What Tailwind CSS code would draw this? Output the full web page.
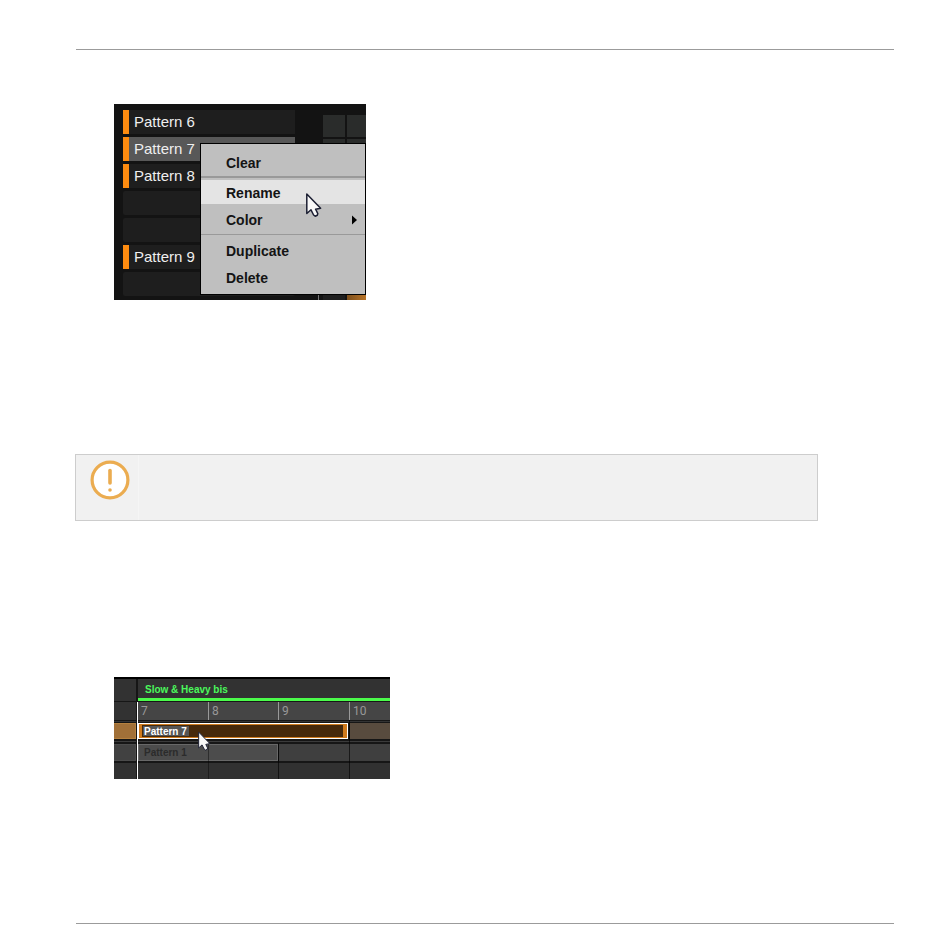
<!DOCTYPE html>
<html lang="en">
<head>
<meta charset="UTF-8"/>
<meta name="viewport" content="width=device-width, initial-scale=1.0"/>
<title>Renaming Patterns</title>
<script src="https://cdn.jsdelivr.net/npm/@tailwindcss/browser@4"></script>
</head>
<body class="bg-white font-['Liberation_Sans',sans-serif]">
<main class="flex flex-col min-h-screen pl-[76px] pr-14 pt-[49px] pb-[27px]">
  <hr class="border-t border-[#9b9b9b]">

  <!-- pattern list with context menu -->
  <figure class="relative mt-[54px] ml-[38px] w-[252px] h-[196px] overflow-hidden bg-[#131313] flex justify-between">
    <ul class="ml-[9px] mt-1.5 w-[172px] flex flex-col gap-[3px] text-[15px] text-[#efefef]">
      <li class="flex items-center shrink-0 h-6 pl-[5px] bg-[#1e1e1e] border-l-6 border-[#ff8c10]">Pattern 6</li>
      <li class="flex items-center shrink-0 h-6 pl-[5px] bg-[#585858] border-l-6 border-[#ff8c10]">Pattern 7</li>
      <li class="flex items-center shrink-0 h-6 pl-[5px] bg-[#1e1e1e] border-l-6 border-[#ff8c10]">Pattern 8</li>
      <li class="shrink-0 h-6 bg-[#1e1e1e] rounded-xs"></li>
      <li class="shrink-0 h-6 bg-[#1e1e1e] rounded-xs"></li>
      <li class="flex items-center shrink-0 h-6 pl-[5px] bg-[#1e1e1e] border-l-6 border-[#ff8c10]">Pattern 9</li>
      <li class="shrink-0 h-6 bg-[#1e1e1e] rounded-xs"></li>
    </ul>
    <div class="flex flex-col justify-between w-12 pt-[11px]">
      <div class="grid grid-cols-[22px_19px] gap-[2px] ml-[5px]">
        <span class="h-[22px] bg-[#2a2c2b]"></span><span class="h-[22px] bg-[#2a2c2b]"></span>
        <span class="h-[22px] bg-[#2a2c2b]"></span><span class="h-[22px] bg-[#2a2c2b]"></span>
      </div>
      <div class="flex h-2 border-l border-[#777]">
        <span class="ml-1 w-[22px] bg-[#1e1e1e]"></span>
        <span class="ml-[2px] grow bg-linear-to-r from-[#7d4f1c] to-[#b87428]"></span>
      </div>
    </div>

    <div role="menu" class="absolute left-[86px] top-[39px] right-0 flex flex-col pt-[5px] pb-[3px] bg-[#bfbfbf] border border-black text-sm font-bold text-[#141414]">
      <button role="menuitem" class="h-[27px] px-[25px] text-left">Clear</button>
      <hr class="border-t-2 border-[#999] mb-[2px]">
      <button role="menuitem" class="h-6 px-[25px] pt-[2px] text-left bg-[#e4e4e4]">Rename</button>
      <button role="menuitem" class="h-[30px] pl-[25px] pr-2 pt-[2px] flex items-center justify-between">Color
        <svg class="w-[5px] h-[10px]" viewBox="0 0 5 10"><path d="M0 .5L5 5L0 9.5Z" fill="#000"/></svg>
      </button>
      <hr class="border-t border-[#999] mb-[2px]">
      <button role="menuitem" class="h-[27px] px-[25px] text-left">Duplicate</button>
      <button role="menuitem" class="h-[27px] px-[25px] text-left">Delete</button>
    </div>
    <svg class="absolute left-[192px] top-[89px] w-4 h-6" viewBox="0 0 16 24">
      <path d="M.8 1L.8 20.5L5 16.8L7.6 22L9.2 23.2L11.3 22.3L11.8 20.6L9.6 16.2L14.6 15.2Z" fill="#f8f8f8" stroke="#1c1f33" stroke-width="1.5" stroke-linejoin="round"/>
    </svg>
  </figure>

  <!-- note box -->
  <aside class="-ml-px mt-[154px] mr-[76px] flex h-[67px] border border-[#cdcdcd] bg-[#f1f1f1]">
    <div class="w-[63px] pl-[14px] pt-[5px] border-r border-[#f5f5f5]">
      <svg class="size-10" viewBox="0 0 40 40">
        <circle cx="20" cy="20" r="17.9" fill="#fff" stroke="#ebac50" stroke-width="3.2"/>
        <path d="M20 10.5V23" stroke="#ebac50" stroke-width="3.6" stroke-linecap="round"/>
        <circle cx="20" cy="30" r="1.8" fill="#ebac50"/>
      </svg>
    </div>
  </aside>

  <!-- arranger with the clip being renamed -->
  <figure class="relative mt-[156px] ml-[38px] w-[276px] h-[102px] overflow-hidden bg-[#161616] border-t-2 border-black flex flex-col">
    <div class="grid grid-cols-[22px_1fr] gap-x-[2px] h-[22px] shrink-0">
      <span class="bg-[#323232]"></span>
      <div class="flex items-center pt-[2px] pl-[7px] bg-[#323232] border-b-3 border-[#4bfb4b] text-[10px] font-bold text-[#4bf85c]">Slow &amp; Heavy bis</div>
    </div>
    <div class="grid grid-cols-[22px_71px_70px_71px_1fr] mt-px h-[18px] shrink-0 bg-[#454545] font-[Roboto,sans-serif] text-xs leading-[18px] text-[#989898]">
      <span class="bg-[#323232]"></span>
      <span class="pl-[5px]">7</span>
      <span class="pl-[5px]">8</span>
      <span class="pl-[5px]">9</span>
      <span class="pl-[5px]">10</span>
    </div>
    <div class="h-px mt-px shrink-0 bg-[#333]"></div>
    <div class="grid grid-cols-[22px_212px_1fr] gap-x-px mt-px h-4 shrink-0">
      <span class="bg-[#a17038] border border-l-0 border-[#b5813f]"></span>
      <div class="ml-px mr-px flex border border-white bg-[#cf7a1c] p-px pl-[3px] pr-1">
        <div class="grow flex items-center bg-[#46290b]">
          <input aria-label="Pattern name" value="Pattern 7" class="ml-px w-[46px] h-[10px] pl-px bg-[#555] text-[10px] leading-[10px] font-bold text-white outline-none">
        </div>
      </div>
      <span class="bg-[#584b3e]"></span>
    </div>
    <div class="h-px my-[2px] shrink-0 bg-[#3b3b3b]"></div>
    <div class="grid grid-cols-[22px_141px_1fr] gap-x-px h-[17px] shrink-0">
      <span class="bg-[#414141] border border-[#4b4b4b] border-l-0"></span>
      <div class="ml-px flex items-center pl-[5px] bg-[#4c4c4c] border border-[#686868] text-[10px] font-bold text-[#2b2b2b]">Pattern 1</div>
      <span class="bg-[#3f3f3f]"></span>
    </div>
    <div class="mt-[2px] grow bg-[#313131]"></div>

    <!-- bar lines, playhead -->
    <span class="absolute left-[22px] top-[23px] bottom-0 w-px bg-[#161616]"></span>
    <span class="absolute left-[23px] top-[23px] bottom-0 w-px bg-white"></span>
    <span class="absolute left-[94px] top-[23px] h-[18px] w-px bg-[#999]"></span>
    <span class="absolute left-[164px] top-[23px] h-[18px] w-px bg-[#999]"></span>
    <span class="absolute left-[235px] top-[23px] h-[18px] w-px bg-[#999]"></span>
    <span class="absolute left-[94px] top-[64px] bottom-0 w-px bg-black/40"></span>
    <span class="absolute left-[164px] top-[64px] bottom-0 w-px bg-black/60"></span>
    <span class="absolute left-[235px] top-[41px] bottom-0 w-px bg-black/60"></span>
    <svg class="absolute left-[84px] top-[52px] w-[13px] h-5" viewBox="0 0 16 24">
      <path d="M.8 1L.8 20.5L5 16.8L7.6 22L9.2 23.2L11.3 22.3L11.8 20.6L9.6 16.2L14.6 15.2Z" fill="#f8f8f8" stroke="#1c1f33" stroke-width="1.2" stroke-linejoin="round"/>
    </svg>
  </figure>

  <hr class="mt-auto border-t border-[#9b9b9b]">
</main>
</body>
</html>
